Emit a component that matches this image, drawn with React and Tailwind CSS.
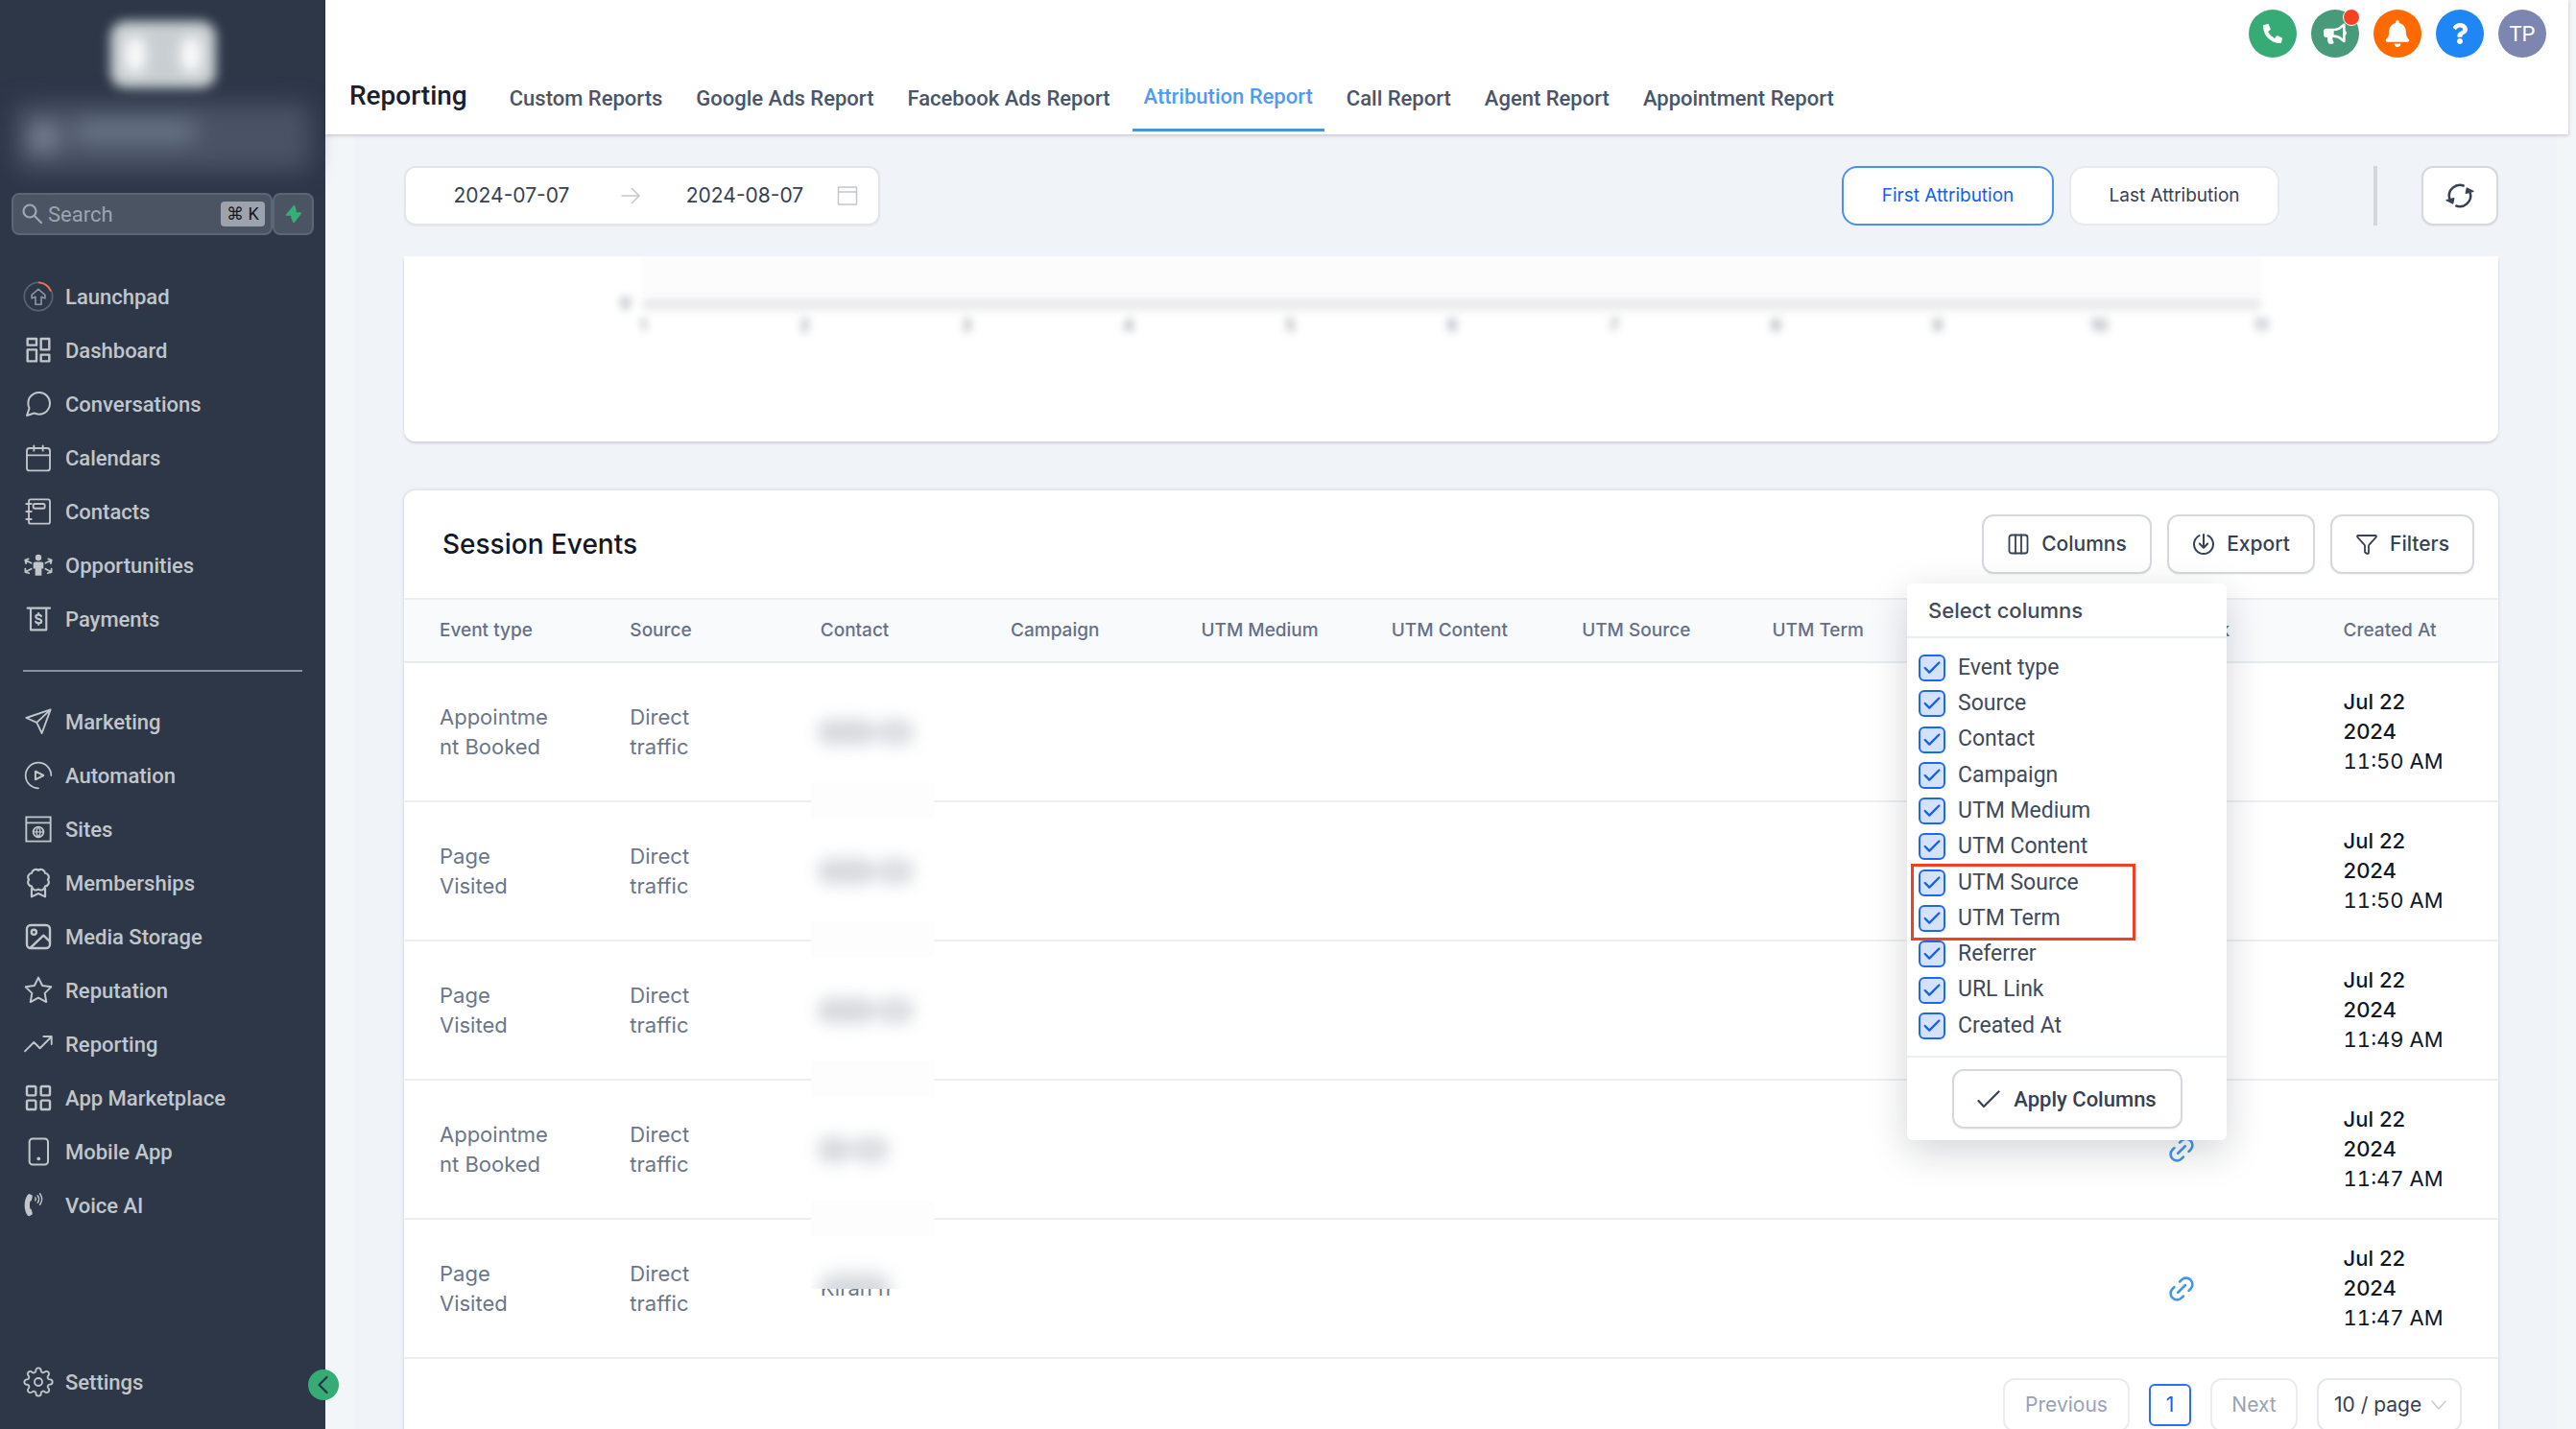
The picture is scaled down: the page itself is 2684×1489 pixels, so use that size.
import { FaBell, FaBullhorn, FaPhoneAlt, FaQuestion } from 'react-icons/fa';
import { FiMessageCircle, FiSettings, FiStar } from 'react-icons/fi';
import { Check, Filter, Link2 } from 'lucide-react';

// shared wrapper for the hand drawn 24-unit icons
function Icon({ children, className = 'size-8', strokeWidth = 1.5 }) {
  return (
    <svg viewBox="0 0 24 24" className={className} fill="none" stroke="currentColor"
      strokeWidth={strokeWidth} strokeLinecap="round" strokeLinejoin="round" aria-hidden="true">
      {children}
    </svg>
  );
}

const LaunchpadIcon = () => (
  <Icon strokeWidth={1.2}>
    <circle cx="12" cy="12" r="11" stroke="#5a6474" />
    <path d="M12.5 1a11 11 0 0 1 9 6.5" stroke="#f9704f" />
    <path d="M12 6.2 6.8 10.8v2.6l2.9-1.2v6h4.6v-6l2.9 1.2v-2.6L12 6.2Z" stroke="#8d96a3" />
  </Icon>
);

const DashboardIcon = () => (
  <Icon strokeWidth={1.8}>
    <path d="M3.5 3h7v5h-7zM14 3h6.5v8.5H14zM3.5 11.5h7v9h-7zM14 15.5h6.5v5H14z" />
  </Icon>
);

const CalendarIcon = () => (
  <Icon strokeWidth={1.4}>
    <rect x="3" y="4.5" width="18" height="17.5" rx="2" />
    <path d="M3 10h18M8.5 2.5v4M15.5 2.5v4" />
  </Icon>
);

const ContactsIcon = () => (
  <Icon strokeWidth={1.4}>
    <rect x="4.5" y="2.5" width="16.5" height="19" rx="1.5" />
    <rect x="8" y="6" width="9" height="3.6" rx="1.2" />
    <path d="M2.5 6h4M2.5 12h4M2.5 18h4" />
  </Icon>
);

const OpportunitiesIcon = () => (
  <Icon strokeWidth={1.3}>
    <circle cx="12" cy="6" r="2.4" fill="currentColor" stroke="none" />
    <path d="M9.6 9.3h4.8a1.6 1.6 0 0 1 1.6 1.6v3.8h-1.5V20h-5v-5.3H8v-3.8a1.6 1.6 0 0 1 1.6-1.6Z" fill="currentColor" stroke="none" />
    <path d="M6.5 10.3 1.8 8M4.3 7 1.6 7.9l.8 2.7M17.5 10.3 22.2 8M19.7 7l2.7.9-.8 2.7M6.5 14.8l-4.7 2.5M1.8 14.7v2.7l2.9.8M17.5 14.8l4.7 2.5M22.2 14.7v2.7l-2.9.8" />
  </Icon>
);

const PaymentsIcon = () => (
  <Icon strokeWidth={1.6}>
    <path d="M3.5 3.5H21M6 3.5v17h12.200v-17" />
    <path d="M14.200 9.800c-.4-.8-1.100-1.100-2.100-1.100-1.300 0-2.100.7-2.100 1.600 0 2.300 4.400 1.100 4.400 3.400 0 1-.9 1.600-2.200 1.600-1.100 0-1.900-.4-2.300-1.200M12.100 7.600v1.100M12.100 15.300v1.100" />
  </Icon>
);

const SendIcon = () => (
  <Icon strokeWidth={1.4}>
    <path d="M21.500 2.500 2.500 9l8.200 3.700 4 8.300 6.800-18.500ZM10.700 12.700 21.500 2.500" />
  </Icon>
);

const AutomationIcon = () => (
  <Icon strokeWidth={1.3}>
    <path d="M12 22a10 10 0 1 1 10-10" />
    <path d="M9.700 8.800v6.400l6.300-3.200-6.300-3.200Z" strokeWidth="1.5" />
  </Icon>
);

const SitesIcon = () => (
  <Icon strokeWidth={1.4}>
    <path d="M2.500 2.500h19v19h-19zM2.500 7h19" strokeLinejoin="miter" />
    <circle cx="12" cy="14.200" r="4" />
    <path d="M8 14.200h8M12 10.200c-2 2.600-2 5.400 0 8M12 10.200c2 2.600 2 5.400 0 8" strokeWidth="1" />
  </Icon>
);

const BadgeIcon = () => (
  <Icon strokeWidth={1.6}>
    <path d="M12 2.1A3.200 3.200 0 0 1 17.200 4.300 3.200 3.200 0 0 1 19.400 9.500 3.200 3.200 0 0 1 17.200 14.700 3.200 3.200 0 0 1 12 16.900 3.200 3.200 0 0 1 6.800 14.700 3.200 3.200 0 0 1 4.600 9.500 3.200 3.200 0 0 1 6.800 4.300 3.200 3.200 0 0 1 12 2.100Z" />
    <path d="M6.700 16.500v6.300l5.300-2.500 5.300 2.500v-6.300" />
  </Icon>
);

const MediaIcon = () => (
  <Icon strokeWidth={1.8}>
    <rect x="3" y="3" width="18" height="18" rx="3" />
    <circle cx="8.5" cy="8.5" r="1.9" />
    <path d="M6 20.500 16 11l5 4.800" />
  </Icon>
);

const TrendIcon = () => (
  <Icon strokeWidth={1.4}>
    <path d="M1.500 17.500 8.500 10.500l4.700 4.700 9-9M16 6h6.300v6" />
  </Icon>
);

const MarketplaceIcon = () => (
  <Icon strokeWidth={1.8}>
    <rect x="3" y="3" width="7" height="7" rx="1" />
    <rect x="14" y="3" width="7" height="7" rx="1" />
    <rect x="3" y="14" width="7" height="7" rx="1" />
    <rect x="14" y="14" width="7" height="7" rx="1" />
  </Icon>
);

const MobileIcon = () => (
  <Icon>
    <rect x="5" y="1.8" width="14.5" height="20.4" rx="2.5" />
    <circle cx="12.2" cy="17.5" r=".7" fill="currentColor" />
  </Icon>
);

const VoiceIcon = () => (
  <Icon strokeWidth={1.1}>
    <path d="M5.200 3.200 6.800 4c.5.300.6.800.5 1.300l-.6 2.500c-.1.500-.5.800-1.100.8-.5 2-.5 4.300 0 6.300.6 0 1 .3 1.100.8l.6 2.300c.1.500 0 1-.5 1.300l-1.600 1c-.5.300-1 .2-1.400-.2C.4 16.500.4 7.300 3.800 3.500c.4-.4.9-.6 1.400-.3Z" fill="currentColor" stroke="none" />
    <path d="M9.600 5.900c.5.700.5 1.600 0 2.300M11.400 4.300c1.300 1.700 1.300 3.900 0 5.600M13.200 2.800c1.900 2.600 1.900 6 0 8.600" />
  </Icon>
);

const RefreshIcon = () => (
  <Icon className="size-8" strokeWidth={1.9}>
    <path d="M15.500 4.400A8.400 8.400 0 0 0 4 14.500M8.500 19.600A8.400 8.400 0 0 0 20 9.500" strokeLinecap="butt" />
    <path d="m1.500 15.500 5 2.500.8-4ZM22.500 8.500l-5-2.500-.8 4Z" fill="currentColor" strokeWidth="1" />
  </Icon>
);

const ColumnsIcon = () => (
  <Icon className="size-6" strokeWidth={1.8}>
    <rect x="2.5" y="2.5" width="19" height="19" rx="2.5" />
    <path d="M9 2.500v19M15 2.500v19" />
  </Icon>
);

const ExportIcon = () => (
  <Icon className="size-6" strokeWidth={2}>
    <path d="M7.500 3.100a10 10 0 1 0 9 0M12 2v13.500M7.800 11.500l4.200 4.200 4.200-4.200" />
  </Icon>
);

const mainNav = [
  ['Launchpad', <LaunchpadIcon />],
  ['Dashboard', <DashboardIcon />],
  ['Conversations', <FiMessageCircle className="size-8" strokeWidth={1.5} />],
  ['Calendars', <CalendarIcon />],
  ['Contacts', <ContactsIcon />],
  ['Opportunities', <OpportunitiesIcon />],
  ['Payments', <PaymentsIcon />],
];

const toolsNav = [
  ['Marketing', <SendIcon />],
  ['Automation', <AutomationIcon />],
  ['Sites', <SitesIcon />],
  ['Memberships', <BadgeIcon />],
  ['Media Storage', <MediaIcon />],
  ['Reputation', <FiStar className="size-8" strokeWidth={1.5} />],
  ['Reporting', <TrendIcon />],
  ['App Marketplace', <MarketplaceIcon />],
  ['Mobile App', <MobileIcon />],
  ['Voice AI', <VoiceIcon />],
];

const tabs = ['Custom Reports', 'Google Ads Report', 'Facebook Ads Report', 'Attribution Report', 'Call Report', 'Agent Report', 'Appointment Report'];

const columns = ['Event type', 'Source', 'Contact', 'Campaign', 'UTM Medium', 'UTM Content', 'UTM Source', 'UTM Term', 'Referrer', 'URL Link', 'Created At'];

const events = [
  { id: 1, type: 'Appointment Booked', time: '11:50 AM' },
  { id: 2, type: 'Page Visited', time: '11:50 AM' },
  { id: 3, type: 'Page Visited', time: '11:49 AM' },
  { id: 4, type: 'Appointment Booked', time: '11:47 AM', short: true },
  { id: 5, type: 'Page Visited', time: '11:47 AM', name: 'Kiran n' },
];

function NavItem({ label, icon }) {
  return (
    <a href="#" className="flex h-14 items-center gap-3 pl-6 text-[22px] font-medium text-[#c0c6ca]">
      <span className="flex size-8 shrink-0 items-center justify-center">{icon}</span>
      {label}
    </a>
  );
}

function Sidebar() {
  return (
    <aside className="relative flex w-[339px] shrink-0 flex-col bg-[#2d3748]">
      {/* Agency logo and account switcher, both obscured */}
      <div className="flex h-[108px] justify-center pt-[22px]">
        <div className="flex h-[70px] w-[110px] justify-between rounded-2xl bg-[#c8ced1] px-4 py-4 blur-[6px]">
          <span className="w-5 rounded-full bg-white blur-[5px]" />
          <span className="w-5 rounded-full bg-white blur-[5px]" />
        </div>
      </div>
      <div className="mx-4 flex h-[70px] items-center gap-4 rounded-xl bg-[#4a5364] pl-4 blur-md">
        <span className="size-7 rounded-full bg-[#8a94a6]" />
        <span className="mb-3 h-5 w-32 rounded-lg bg-[#717c91]" />
      </div>

      <div className="mt-[23px] flex px-3">
        <div className="flex h-11 w-[272px] items-center rounded-lg border-2 border-[#5d6675] bg-[#4a5463] pr-1.5 pl-2">
          <Icon className="size-6 shrink-0 text-[#a0a6b2]" strokeWidth={2.2}>
            <circle cx="9" cy="9" r="6.5" />
            <path d="m14 14 7 7" />
          </Icon>
          <input type="search" aria-label="Search" placeholder="Search" className="ml-1 w-0 flex-1 bg-transparent text-[22px] placeholder:text-[#9da4b1] outline-none" />
          <kbd className="w-[46px] rounded-sm bg-[#9ca3af] text-center text-[18px] leading-[26px] text-[#111827] [font-family:Roboto,'DejaVu_Sans',sans-serif]">⌘ K</kbd>
        </div>
        <button type="button" aria-label="Quick actions" className="flex h-11 w-[43px] items-center justify-center rounded-lg border-2 border-[#5d6675] bg-[#4a5463]">
          <svg viewBox="0 0 18 20" className="h-5 w-[18px] fill-[#37ae76] stroke-[#37ae76]" strokeWidth="1.5" strokeLinejoin="round" aria-hidden="true">
            <path d="M9.500 1.500 1.500 11H7v2.500L9 18.500 16.500 9H11V6L9.500 1.500Z" />
          </svg>
        </button>
      </div>

      <nav className="flex flex-1 flex-col pt-9">
        {mainNav.map(([label, icon]) => <NavItem key={label} label={label} icon={icon} />)}
        <hr className="mx-6 mt-[25px] mb-6 border-t-2 border-[#87909c]" />
        {toolsNav.map(([label, icon]) => <NavItem key={label} label={label} icon={icon} />)}
        <div className="mt-auto pb-[21px]">
          <NavItem label="Settings" icon={<FiSettings className="size-8" strokeWidth={1.4} />} />
        </div>
      </nav>

      <button type="button" aria-label="Collapse sidebar" className="absolute -right-[14px] bottom-[30px] z-10 flex size-8 items-center justify-center rounded-full bg-[#37ab75] text-[#253248]">
        <Icon className="size-6" strokeWidth={2.2}>
          <path d="M15.500 4 7.500 12l8 8" />
        </Icon>
      </button>
    </aside>
  );
}

function Header() {
  return (
    <header className="relative mr-2 h-[140px] bg-white font-[Roboto,sans-serif] shadow-[0_1px_4px_rgba(0,0,0,0.22)]">
      <div className="flex h-[60px] items-end justify-end gap-[15px] pr-[23px] text-white">
        <button type="button" aria-label="Call" className="flex size-[50px] items-center justify-center rounded-full bg-[#37ab75]">
          <FaPhoneAlt className="size-5" />
        </button>
        <button type="button" aria-label="Announcements" className="relative flex size-[50px] items-center justify-center rounded-full bg-[#479a7a]">
          <FaBullhorn className="size-6" />
          <span className="absolute -top-px -right-px size-[18px] rounded-full border border-white bg-[#f44322]" />
        </button>
        <button type="button" aria-label="Notifications" className="flex size-[50px] items-center justify-center rounded-full bg-[#ff6a00]">
          <FaBell className="size-7" />
        </button>
        <button type="button" aria-label="Help" className="flex size-[50px] items-center justify-center rounded-full bg-[#1f87f5]">
          <FaQuestion className="size-[22px]" />
        </button>
        <button type="button" className="flex size-[50px] items-center justify-center rounded-full bg-[#7c86b0] text-[22px]">TP</button>
      </div>
      <div className="flex h-[77px] pl-[25px]">
        <h1 className="flex items-center pt-0.5 pr-8 text-[28px] font-medium text-[#1a202c]">Reporting</h1>
        <nav className="flex gap-[11px]">
          {tabs.map((tab) => (
            <a key={tab} href="#"
              className={`flex items-center px-3 text-[22px] font-medium ${tab === 'Attribution Report' ? 'border-b-[3px] border-[#4299e1] pt-1.5 text-[#4f9bf0]' : 'pt-2 text-[#4a5568]'}`}>
              {tab}
            </a>
          ))}
        </nav>
      </div>
    </header>
  );
}

function Toolbar() {
  return (
    <div className="flex h-[62px] items-stretch">
      <div className="flex w-[496px] items-center rounded-xl border-2 border-[#e2e6ea] bg-white text-[21px] text-[#364152] shadow-xs">
        <input aria-label="Start date" defaultValue="2024-07-07" className="ml-[30px] w-40 text-center outline-none" />
        <Icon className="mr-[42px] ml-8 size-6 text-[#c2c7cd]">
          <path d="M3 12h18M13.500 4.500 21 12l-7.500 7.500" />
        </Icon>
        <input aria-label="End date" defaultValue="2024-08-07" className="w-[130px] text-center outline-none" />
        <Icon className="ml-[30px] size-6 text-[#c2c7cd]">
          <path d="M2.500 3h19v18h-19zM2.500 8h19" />
        </Icon>
      </div>
      <div className="ml-auto flex gap-4 text-[19px]">
        <button type="button" className="w-[221px] rounded-2xl border-2 border-[#4a8ff5] bg-white text-[#155eef]">First Attribution</button>
        <button type="button" className="w-[219px] rounded-2xl border-2 border-[#e6e9ed] bg-white text-[#364152]">Last Attribution</button>
      </div>
      <div className="mr-[46px] ml-[98px] w-1 bg-[#d3d7dc]" />
      <button type="button" aria-label="Refresh" className="flex w-20 items-center justify-center rounded-xl border-2 border-[#d5d9de] bg-white text-[#364152] shadow-xs">
        <RefreshIcon />
      </button>
    </div>
  );
}

// lower edge of the chart, scrolled under the toolbar and obscured
function ChartCard() {
  return (
    <section className="mt-8 h-[193px] rounded-b-xl bg-white shadow-[0_2px_3px_rgba(0,0,0,0.14)]">
      <div className="mr-[246px] ml-[247px] h-10 bg-[#fcfcfd]" />
      <div className="mr-[247px] ml-[225px] blur-[4px]">
        <div className="flex h-5 items-center gap-3 text-[17px] text-[#9ca3af]">
          <span className="w-3 font-bold">0</span>
          <span className="h-3 flex-1 bg-[#e9e9eb]" />
        </div>
        <div className="ml-6 flex justify-between text-[17px] font-bold text-[#9ca3af]">
          {Array.from({ length: 11 }, (_, i) => (
            <span key={i} className="flex w-0 justify-center">{i + 1}</span>
          ))}
        </div>
      </div>
    </section>
  );
}

function CardButton({ icon, children, className = '' }) {
  return (
    <button type="button" className={`flex h-[62px] items-center justify-center gap-3 rounded-xl border-2 border-[#d5d9de] bg-white font-medium text-[#364152] shadow-xs ${className}`}>
      {icon}
      {children}
    </button>
  );
}

function ColumnPicker() {
  return (
    <div className="absolute top-[97px] right-[283px] z-20 w-[333px] rounded-md bg-white text-[#3f4a5a] shadow-[0_12px_40px_rgba(16,24,40,0.18)]">
      <h3 className="h-[57px] border-b-2 border-[#e9eef3] pl-[22px] text-[22px] leading-[56px] font-medium">Select columns</h3>
      <div className="relative flex h-[435px] flex-col justify-between py-[17px] font-[Roboto,sans-serif]">
        {columns.map((col) => (
          <label key={col} className="flex h-7 items-center gap-[13px] pl-3 text-[23px]">
            <span className="grid size-7 place-items-center">
              <input type="checkbox" defaultChecked className="col-start-1 row-start-1 size-7 appearance-none rounded-md border-2 border-[#1d68f2] bg-[#d3e2ff]" />
              <Check className="pointer-events-none col-start-1 row-start-1 size-[22px] text-[#155eef]" strokeWidth={2.5} />
            </span>
            {col}
          </label>
        ))}
        <div className="pointer-events-none absolute top-[235px] left-1 h-20 w-[234px] border-[3px] border-[#f53f22]" />
      </div>
      <div className="flex justify-center border-t-2 border-[#edf0f3] py-3 font-[Roboto,sans-serif]">
        <CardButton className="w-[240px] text-[22px]" icon={<Icon className="mr-0.5 size-6" strokeWidth={2.2}><path d="m1.500 14 5.500 6L22.500 4.500" /></Icon>}>
          Apply Columns
        </CardButton>
      </div>
    </div>
  );
}

function ContactCell({ event }) {
  return (
    <td className="relative pl-[37px]">
      {event.name && <span>{event.name}</span>}
      {/* privacy masks over the name and the row line */}
      {event.name
        ? (
          <span className="absolute top-9 left-[27px] h-9 w-[100px] overflow-hidden bg-white">
            <span className="mt-5 ml-2 block h-9 w-[76px] rounded-full bg-[#d6d9dd] blur-[9px]" />
          </span>
        )
        : (
          <>
            <span className={`-ml-1 flex h-7 blur-[8px] ${event.short ? 'w-[76px]' : 'w-[102px]'}`}>
              <span className="flex-1 rounded-full bg-[#d8dbdf]" />
              <span className="w-10 rounded-full bg-[#dcdee2]" />
            </span>
            <span className="absolute -bottom-[19px] left-[27px] z-[1] h-[38px] w-[128px] bg-[#fdfdfd]" />
          </>
        )}
    </td>
  );
}

function EventsTable() {
  return (
    <table className="w-full table-fixed border-collapse text-left">
      <thead>
        <tr className="h-[65px] border-b-2 border-[#e9ecef] bg-[#f9fafc] text-[19px] text-[#667085]">
          {columns.map((col) => <th key={col} className="pl-[37px] font-medium">{col}</th>)}
        </tr>
      </thead>
      <tbody className="text-[22px] leading-[31px] text-[#6b7688]">
        {events.map((event) => (
          <tr key={event.id} className="h-[145px] border-b-2 border-[#eceef1]">
            <td className="px-[37px] break-all">
              {event.type === 'Page Visited' ? <>Page<br />Visited</> : event.type}
            </td>
            <td className="px-[37px]">Direct<br />traffic</td>
            <ContactCell event={event} />
            <td /><td /><td /><td /><td /><td />
            <td className="pl-[51px]">
              <a href="#" aria-label="Open URL" className="inline-flex align-middle">
                <Link2 className="size-8 -rotate-45 text-[#4596ea]" strokeWidth={2} />
              </a>
            </td>
            <td className="pl-[37px] text-[#101828]">
              <span className="font-medium">Jul 22<br />2024</span><br />
              <span className="tabular-nums">{event.time}</span>
            </td>
          </tr>
        ))}
      </tbody>
    </table>
  );
}

function Pagination() {
  return (
    <div className="flex h-24 items-center justify-end gap-5 pr-[38px] text-[21px]">
      <button type="button" disabled className="h-14 w-[132px] rounded-xl border-2 border-[#eaecf0] text-[#98a2b3]">Previous</button>
      <button type="button" aria-current="page" className="size-11 rounded-md border-2 border-[#2970ff] text-[#155eef]">1</button>
      <button type="button" disabled className="h-14 w-[91px] rounded-xl border-2 border-[#eaecf0] text-[#98a2b3]">Next</button>
      <div className="relative">
        <select aria-label="Page size" className="h-14 w-[151px] appearance-none rounded-xl border-2 border-[#e4e7ec] bg-white pl-4 text-[#364152]">
          <option>10 / page</option>
        </select>
        <Icon className="pointer-events-none absolute top-5 right-4 size-4 text-[#c2c7cd]" strokeWidth={1.8}>
          <path d="m1.500 6 10.500 12L22.500 6" />
        </Icon>
      </div>
    </div>
  );
}

function SessionEvents() {
  return (
    <section className="relative mt-[51px] rounded-xl bg-white shadow-[0_0_4px_rgba(0,0,0,0.14)]">
      <div className="flex h-[114px] items-center gap-4 border-b-2 border-[#eceef0] pr-[25px] pl-10">
        <h2 className="mr-auto text-[28px] font-medium text-[#101828]">Session Events</h2>
        <CardButton className="w-[177px] text-[21px]" icon={<ColumnsIcon />}>Columns</CardButton>
        <CardButton className="w-[154px] text-[21px]" icon={<ExportIcon />}>Export</CardButton>
        <CardButton className="w-[150px] text-[21px]" icon={<Filter className="size-6" strokeWidth={1.8} />}>Filters</CardButton>
      </div>
      <ColumnPicker />
      <EventsTable />
      <Pagination />
    </section>
  );
}

export default function App() {
  return (
    <div className="flex h-screen overflow-hidden bg-[#f3f6f9] font-[Roboto,sans-serif]">
      <Sidebar />
      <div className="flex min-w-0 flex-1 flex-col">
        <Header />
        <main className="mr-5 ml-[30px] min-h-0 flex-1 overflow-hidden bg-[#f0f3f7] pt-[33px] pr-[61px] pl-[52px] font-[Inter,sans-serif]">
          <Toolbar />
          <ChartCard />
          <SessionEvents />
        </main>
      </div>
    </div>
  );
}
